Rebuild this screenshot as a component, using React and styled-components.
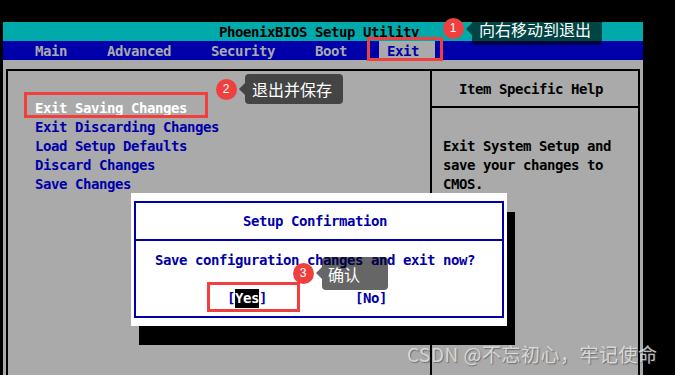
import React from "react";
import styled, { createGlobalStyle, css } from "styled-components";

const GlobalStyle = createGlobalStyle`
  html, body {
    margin: 0;
    padding: 0;
    background: #000;
  }
  body {
    width: 675px;
    height: 375px;
    overflow: hidden;
  }
`;

const BLUE = "#0000aa";
const GRAY = "#aaaaaa";
const TEAL = "#00aaaa";
const RED = "#ef3f3f";

const Page = styled.div`
  position: relative;
  width: 675px;
  height: 375px;
  box-sizing: border-box;
  padding: 22px 0 0 3px;
  background: #000;
  overflow: hidden;
`;

const Screen = styled.div`
  position: relative;
  width: 640px;
  height: 353px;
  display: flex;
  flex-direction: column;
  background: ${GRAY};
  overflow: hidden;
  font-family: "DejaVu Sans Mono", "Liberation Mono", monospace;
  font-weight: bold;
  font-size: 14px;
  letter-spacing: -0.43px;
  white-space: pre;
`;

const TitleBar = styled.div`
  flex: none;
  height: 19px;
  line-height: 20px;
  padding-left: 216px;
  background: ${TEAL};
  color: #000;
`;

const MenuBar = styled.div`
  flex: none;
  height: 19px;
  display: flex;
  gap: 40px;
  padding-left: 32px;
  background: ${BLUE};
`;

const MenuItem = styled.div`
  line-height: 20px;
  color: ${GRAY};
  ${(p) =>
    p.$active &&
    css`
      margin-left: -8px;
      padding: 0 16px 0 8px;
      background: ${GRAY};
      color: ${BLUE};
    `}
`;

const Frame = styled.div`
  flex: none;
  height: 400px;
  margin: 9px 3px 0 3px;
  border: 2px solid #000;
  display: grid;
  grid-template-columns: 422px 1fr;
`;

const OptionList = styled.div`
  padding: 28px 0 0 27px;
  display: flex;
  flex-direction: column;
`;

const Option = styled.div`
  height: 19px;
  line-height: 19px;
  color: ${(p) => (p.$selected ? "#ffffff" : BLUE)};
`;

const HelpPanel = styled.div`
  border-left: 2px solid #000;
  display: flex;
  flex-direction: column;
`;

const HelpHeader = styled.div`
  height: 35px;
  line-height: 37px;
  padding-left: 27px;
  border-bottom: 2px solid #000;
  color: #000;
`;

const HelpText = styled.div`
  padding: 29px 0 0 11px;
  line-height: 19px;
  color: #000;
`;

const Dialog = styled.div`
  position: absolute;
  left: 128px;
  top: 171px;
  width: 376px;
  height: 133px;
  box-sizing: border-box;
  padding: 8px 3px;
  background: #fff;
  box-shadow: 8px 19px 0 #000;
`;

const DialogBox = styled.div`
  height: 100%;
  box-sizing: border-box;
  border: 2px solid ${BLUE};
  display: flex;
  flex-direction: column;
  color: ${BLUE};
`;

const DialogTitle = styled.div`
  height: 36px;
  line-height: 37px;
  padding-left: 107px;
  border-bottom: 2px solid ${BLUE};
`;

const DialogBody = styled.div`
  padding: 10px 0 0 19px;
  display: flex;
  flex-direction: column;
  gap: 19px;
`;

const Line = styled.div`
  line-height: 19px;
`;

const ButtonRow = styled.div`
  display: flex;
  gap: 88px;
  padding-left: 72px;
  line-height: 19px;
`;

const Choice = styled.span`
  display: inline-block;
  line-height: 19px;
  ${(p) =>
    p.$focus &&
    css`
      background: #000;
      color: #fff;
    `}
`;

const RedBox = styled.div`
  position: absolute;
  box-sizing: border-box;
  border: 3px solid ${RED};
`;

const Badge = styled.div`
  position: absolute;
  width: 21px;
  height: 21px;
  border-radius: 50%;
  background: ${RED};
  color: #fff;
  font-family: "Liberation Sans", Arial, sans-serif;
  font-size: 12px;
  line-height: 21px;
  text-align: center;
`;

const Tip = styled.div`
  position: absolute;
  box-sizing: border-box;
  border-radius: 4px;
  background: rgba(0, 0, 0, 0.6);
  color: #fff;
  font-family: "Noto Sans CJK SC", "Noto Sans", sans-serif;
  font-size: 16px;
  white-space: nowrap;
  &::before {
    content: "";
    position: absolute;
    left: -6px;
    top: ${(p) => p.$arrow}px;
    border-top: 6px solid transparent;
    border-bottom: 6px solid transparent;
    border-right: 6px solid rgba(0, 0, 0, 0.6);
  }
`;

const Watermark = styled.div`
  position: absolute;
  left: 407px;
  top: 341px;
  font-family: "Noto Sans CJK SC", "Noto Sans", sans-serif;
  font-size: 19px;
  letter-spacing: 0.5px;
  line-height: 26px;
  color: rgba(235, 235, 235, 0.8);
  text-shadow: 1px 1px 1px rgba(60, 60, 60, 0.55);
  white-space: nowrap;
`;

const menu = ["Main", "Advanced", "Security", "Boot", "Exit"];
const options = [
  "Exit Saving Changes",
  "Exit Discarding Changes",
  "Load Setup Defaults",
  "Discard Changes",
  "Save Changes",
];

const boxes = [
  { x: 367, y: 37, w: 76, h: 24 },
  { x: 24, y: 92, w: 184, h: 26 },
  { x: 207, y: 282, w: 93, h: 30 },
];

const notes = [
  { n: 1, cx: 453, cy: 28, tip: { x: 472, y: 14, w: 130, h: 31, pad: "0 0 0 7px", lh: 31, arrow: 9 }, text: "向右移动到退出" },
  { n: 2, cx: 226, cy: 89, tip: { x: 245, y: 74, w: 98, h: 30, pad: "0 0 0 7px", lh: 30, arrow: 9 }, text: "退出并保存" },
  { n: 3, cx: 303, cy: 273, tip: { x: 322, y: 257, w: 66, h: 33, pad: "2px 0 0 6px", lh: 30, arrow: 10 }, text: "确认" },
];

export default function App() {
  return (
    <>
      <GlobalStyle />
      <Page>
        <Screen>
          <TitleBar>PhoenixBIOS Setup Utility</TitleBar>
          <MenuBar>
            {menu.map((m) => (
              <MenuItem key={m} $active={m === "Exit"}>
                {m}
              </MenuItem>
            ))}
          </MenuBar>
          <Frame>
            <OptionList>
              {options.map((o, i) => (
                <Option key={o} $selected={i === 0}>
                  {o}
                </Option>
              ))}
            </OptionList>
            <HelpPanel>
              <HelpHeader>Item Specific Help</HelpHeader>
              <HelpText>
                Exit System Setup and
                <br />
                save your changes to
                <br />
                CMOS.
              </HelpText>
            </HelpPanel>
          </Frame>
          <Dialog>
            <DialogBox>
              <DialogTitle>Setup Confirmation</DialogTitle>
              <DialogBody>
                <Line>Save configuration changes and exit now?</Line>
                <ButtonRow>
                  <span>
                    [<Choice $focus>Yes</Choice>]
                  </span>
                  <span>[No]</span>
                </ButtonRow>
              </DialogBody>
            </DialogBox>
          </Dialog>
        </Screen>

        {boxes.map((b, i) => (
          <RedBox
            key={i}
            style={{ left: b.x, top: b.y, width: b.w, height: b.h }}
          />
        ))}
        {notes.map((a) => (
          <React.Fragment key={a.n}>
            <Badge style={{ left: a.cx - 10.5, top: a.cy - 10.5 }}>{a.n}</Badge>
            <Tip
              $arrow={a.tip.arrow}
              style={{
                left: a.tip.x,
                top: a.tip.y,
                width: a.tip.w,
                height: a.tip.h,
                padding: a.tip.pad,
                lineHeight: `${a.tip.lh}px`,
              }}
            >
              {a.text}
            </Tip>
          </React.Fragment>
        ))}
        <Watermark>CSDN @不忘初心，牢记使命</Watermark>
      </Page>
    </>
  );
}
